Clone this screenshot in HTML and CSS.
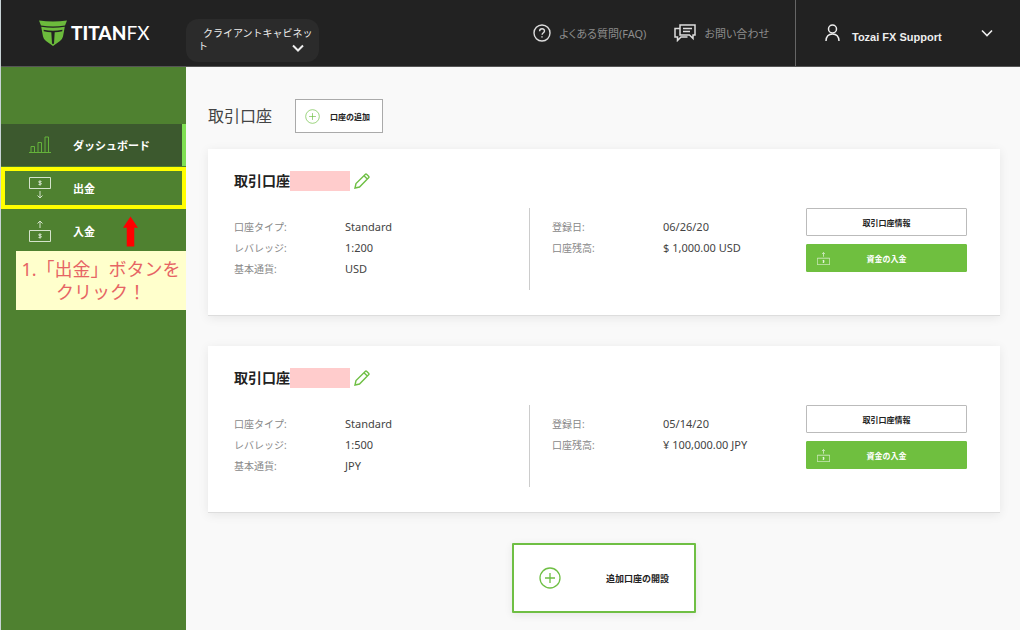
FILE: index.html
```html
<!DOCTYPE html>
<html lang="ja">
<head>
<meta charset="utf-8">
<meta name="viewport" content="width=device-width, initial-scale=1">
<title>Titan FX</title>
<link rel="stylesheet" href="styles.css">
</head>
<body>
<svg class="sprite" aria-hidden="true">
  <symbol id="plus" viewBox="0 0 22 22"><circle cx="11" cy="11" r="10"/><path d="M11 6v10M6 11h10"/></symbol>
  <symbol id="pencil" viewBox="0 0 16 16"><path d="M1 15l1-4.500L11.200 1.400q.8-.8 1.600 0l1.800 1.800q.8.8 0 1.600L5.500 14zM10 2.800l3.300 3.300"/></symbol>
  <symbol id="deposit" viewBox="0 0 22 22"><path d="M.5 10.500h21v11H.5zM11 8V1M8.500 3.500L11 1l2.500 2.500M12.500 14.500q-3-1-3 .5c0 1 3 .5 3 2q0 1-3 .5M11 13.500v5"/></symbol>
  <symbol id="withdraw" viewBox="0 0 22 22"><path d="M.5.500h21v11H.5zM11 14v7M8.500 18.500L11 21l2.500-2.500M12.500 4.500q-3-1-3 .5c0 1 3 .5 3 2q0 1-3 .5M11 3.500v5"/></symbol>
  <symbol id="chevron" viewBox="0 0 12 8"><path d="M1 1.500l5 5 5-5"/></symbol>
</svg>

<header class="topbar">
  <a class="logo" href="#">
    <svg class="logo-mark" viewBox="0 0 28 26" aria-hidden="true">
      <path d="M0 .5q14 2 28 0L26 5.500q-12 2-24 0z"/>
      <path d="M2.200 6.800q11.800 2 23.600 0L24 16.500q-.6 2.800-3 4.500l-7 5-7-5q-2.400-1.700-3-4.500z"/>
      <path class="logo-cut" d="M4.500 9.800q9.500 1.800 19 0l-.3 1.400q-3.800.8-7.500 1L15 23.500l-1 .8-1-.8-.7-11.300q-3.700-.2-7.500-1z"/>
    </svg>
    <span class="wordmark">TITAN<span class="wordmark-thin">FX</span></span>
  </a>
  <button class="cabinet" type="button">クライアントキャビネット<svg class="cabinet-chevron"><use href="#chevron"/></svg></button>
  <nav class="toplinks">
    <a class="toplink" href="#">
      <svg class="icon-help" viewBox="0 0 18 18" aria-hidden="true"><circle cx="9" cy="9" r="8"/><path d="M6.600 7.300c0-3.400 5-3.200 4.900-.3 0 1.800-2.400 1.700-2.400 3.700M9 12.200v1.400"/></svg>
      よくある質問(FAQ)</a>
    <a class="toplink" href="#">
      <svg class="icon-chat" viewBox="0 0 22 18" aria-hidden="true"><path d="M6 1h15v10h-2v3.500L15.500 11H6zM9 4.500h9M9 7.500h7M6 4.500H1V13h2.500v3.500L7 13h6.500"/></svg>
      お問い合わせ</a>
  </nav>
  <button class="account" type="button">
    <svg class="icon-user" viewBox="0 0 15 18" aria-hidden="true"><circle cx="7.500" cy="5" r="4"/><path d="M1 17q.3-7 6.500-7t6.500 7"/></svg>
    <span class="account-name">Tozai FX Support</span>
    <svg class="account-chevron"><use href="#chevron"/></svg>
  </button>
</header>

<div class="layout">
  <aside class="sidebar">
    <nav class="menu">
      <a class="item item-active" href="#">
        <svg class="item-icon" viewBox="0 0 22 22" aria-hidden="true"><path d="M0 18.500h22M2 18v-5.500h3.500V18M9 18V8.500h3.500V18M16 18V3h3.500v15"/></svg>ダッシュボード</a>
      <a class="item item-marked" href="#"><svg class="item-icon"><use href="#withdraw"/></svg>出金</a>
      <a class="item" href="#"><svg class="item-icon"><use href="#deposit"/></svg>入金</a>
    </nav>
    <svg class="arrow" viewBox="0 0 16 32" aria-hidden="true"><path d="M8 0l8 12h-4v20H4V12H0z"/></svg>
    <p class="note">1.「出金」ボタンを<br>クリック！</p>
  </aside>

  <main class="content">
    <div class="heading">
      <h1 class="title">取引口座</h1>
      <button class="add" type="button"><svg class="add-icon"><use href="#plus"/></svg>口座の追加</button>
    </div>

    <section class="card">
      <div class="card-head">
        <h2 class="card-title">取引口座</h2><span class="redacted"></span>
        <button class="edit" type="button" aria-label="編集"><svg class="edit-icon"><use href="#pencil"/></svg></button>
      </div>
      <div class="card-body">
        <dl class="facts facts-ruled">
          <dt>口座タイプ:</dt><dd>Standard</dd>
          <dt>レバレッジ:</dt><dd>1:200</dd>
          <dt>基本通貨:</dt><dd>USD</dd>
        </dl>
        <dl class="facts">
          <dt>登録日:</dt><dd>06/26/20</dd>
          <dt>口座残高:</dt><dd>$ 1,000.00 USD</dd>
        </dl>
        <div class="actions">
          <button class="action" type="button">取引口座情報</button>
          <button class="action action-fund" type="button"><svg class="fund-icon"><use href="#deposit"/></svg>資金の入金</button>
        </div>
      </div>
    </section>

    <section class="card">
      <div class="card-head">
        <h2 class="card-title">取引口座</h2><span class="redacted"></span>
        <button class="edit" type="button" aria-label="編集"><svg class="edit-icon"><use href="#pencil"/></svg></button>
      </div>
      <div class="card-body">
        <dl class="facts facts-ruled">
          <dt>口座タイプ:</dt><dd>Standard</dd>
          <dt>レバレッジ:</dt><dd>1:500</dd>
          <dt>基本通貨:</dt><dd>JPY</dd>
        </dl>
        <dl class="facts">
          <dt>登録日:</dt><dd>05/14/20</dd>
          <dt>口座残高:</dt><dd>¥ 100,000.00 JPY</dd>
        </dl>
        <div class="actions">
          <button class="action" type="button">取引口座情報</button>
          <button class="action action-fund" type="button"><svg class="fund-icon"><use href="#deposit"/></svg>資金の入金</button>
        </div>
      </div>
    </section>

    <button class="open-account" type="button"><svg class="open-icon"><use href="#plus"/></svg><span class="open-label">追加口座の開設</span></button>
  </main>
</div>
</body>
</html>
```

FILE: styles.css
```css
* { box-sizing: border-box; }

body {
  margin: 0;
  padding-left: 1px;
  min-height: 100vh;
  display: flex;
  flex-direction: column;
  background: #c9d3d6;
  color: #222;
  font-family: "Noto Sans", "Noto Sans CJK JP", sans-serif;
  font-size: 11px;
}

button {
  margin: 0;
  padding: 0;
  border: 0;
  background: none;
  color: inherit;
  font: inherit;
  cursor: pointer;
}

a { color: inherit; text-decoration: none; }
svg { fill: none; stroke: currentColor; flex: none; }
.sprite { position: absolute; width: 0; height: 0; }

/* Top bar */
.topbar {
  display: flex;
  align-items: center;
  height: 67px;
  background: #222;
  border-bottom: 1px solid #555;
  color: #eee;
}

.logo {
  display: flex;
  align-items: center;
  gap: 4px;
  width: 185px;
  padding-left: 38px;
}
.logo-mark { width: 28px; height: 26px; fill: #6cbb3c; stroke: none; }
.logo-cut { fill: #222; }
.wordmark { color: #fff; font: 900 19px/20px Lato, sans-serif; }
.wordmark-thin { font-weight: 400; }

.cabinet {
  position: relative;
  width: 133px;
  height: 43px;
  margin-top: 14px;
  padding: 3px 4px 4px 12px;
  border-radius: 12px;
  background: #2b2b2b;
  color: #eee;
  font-size: 10px;
  line-height: 13px;
  text-align: left;
  text-indent: 5px;
}
.cabinet-chevron {
  position: absolute;
  right: 15px;
  bottom: 10px;
  width: 12px;
  height: 8px;
  stroke-width: 2;
}

.toplinks {
  display: flex;
  gap: 28px;
  margin-left: auto;
  padding-right: 26px;
  color: #8c8c8c;
  font-feature-settings: "palt";
}
.toplink { display: flex; align-items: center; gap: 8px; white-space: nowrap; }
.icon-help { width: 18px; height: 18px; color: #ddd; stroke-width: 1.4; }
.icon-chat { width: 22px; height: 18px; color: #ddd; stroke-width: 1.5; }

.account {
  display: flex;
  align-items: center;
  align-self: stretch;
  width: 225px;
  padding: 0 27px 0 29px;
  border-left: 1px solid #666;
  color: #eee;
}
.icon-user { width: 15px; height: 18px; stroke-width: 1.5; }
.account-name {
  margin: 8px auto 0 12px;
  font: bold 11px/16px "Liberation Sans", sans-serif;
}
.account-chevron { width: 12px; height: 8px; stroke-width: 1.6; }

.layout { display: flex; flex: 1; }

/* Sidebar */
.sidebar {
  position: relative;
  flex: none;
  width: 185px;
  padding-top: 57px;
  background: #4f8130;
}
.menu { display: flex; flex-direction: column; gap: 1px; }
.item {
  display: flex;
  align-items: center;
  gap: 22px;
  height: 42px;
  padding-left: 28px;
  color: #fff;
  font-weight: bold;
}
.item-icon { width: 22px; height: 22px; color: #d5e3cc; }
.item-active { background: #3c592e; border-right: 4px solid #7fe052; }
.item-active .item-icon { color: #64b33a; }
.item-marked { outline: 4px solid #ff0; outline-offset: -4px; }

.arrow {
  position: absolute;
  left: 122px;
  top: 149px;
  width: 15px;
  height: 31px;
  fill: #f00;
  stroke: none;
}
.note {
  position: absolute;
  left: 15px;
  right: 0;
  top: 184px;
  margin: 0;
  padding: 7px 0 6px;
  background: #ffc;
  color: #e66464;
  font-size: 18px;
  font-weight: 400;
  line-height: 23px;
  text-align: center;
  white-space: nowrap;
}

/* Content */
.content {
  flex: 1;
  min-width: 0;
  display: flex;
  flex-direction: column;
  padding: 32px 20px 16px 22px;
  background: #f9f9f9;
}
.heading { display: flex; align-items: center; gap: 23px; margin-bottom: 16px; }
.title { margin: 0; color: #444; font-size: 16px; font-weight: 400; line-height: 24px; }
.add {
  display: flex;
  align-items: center;
  gap: 10px;
  width: 88px;
  height: 34px;
  padding-left: 9px;
  border: 1px solid #aaa;
  background: #fff;
  font-size: 8px;
  font-weight: bold;
  white-space: nowrap;
}
.add-icon { width: 15px; height: 15px; color: #6fbf44; }

.card {
  margin-bottom: 30px;
  padding: 22px 33px 25px 26px;
  background: #fff;
  border-bottom: 1px solid #ddd;
  box-shadow: 0 2px 10px #00000014;
}
.card-head { display: flex; align-items: center; height: 20px; }
.card-title { margin: 0; font-size: 14px; line-height: 20px; }
.redacted { width: 60px; height: 20px; background: #fcc; }
.edit { display: flex; margin-left: 4px; }
.edit-icon { width: 16px; height: 16px; color: #6fbf44; stroke-width: 1.4; }

.card-body {
  display: grid;
  grid-template-columns: 296fr 276fr 161px;
  margin-top: 17px;
}
.facts {
  display: grid;
  grid-template-columns: 111px 1fr;
  grid-auto-rows: 21px;
  align-items: center;
  height: 82px;
  margin: 0;
  padding-top: 8px;
  white-space: nowrap;
}
.facts-ruled { border-right: 1px solid #ccc; }
.facts + .facts { padding-left: 22px; }
.facts dt { color: #888; font-size: 10px; }
.facts dd { margin: 0; color: #444; }

.actions { display: flex; flex-direction: column; gap: 8px; }
.action {
  position: relative;
  height: 28px;
  border: 1px solid #bbb;
  border-radius: 1px;
  background: #fff;
  font-size: 8px;
  font-weight: bold;
}
.action-fund { border-color: #6fbf3f; background: #6fbf3f; color: #fff; }
.fund-icon { position: absolute; left: 10px; top: 7px; width: 13px; height: 13px; }

.open-account {
  display: flex;
  align-items: center;
  align-self: center;
  width: 184px;
  height: 70px;
  padding: 0 25px;
  border: 2px solid #6fbf44;
  border-radius: 1px;
  background: #fff;
  box-shadow: 0 2px 8px #00000014;
  font-size: 9px;
  font-weight: bold;
}
.open-icon { width: 22px; height: 22px; color: #6fbf44; stroke-width: 1.3; }
.open-label { margin-left: auto; }
```
